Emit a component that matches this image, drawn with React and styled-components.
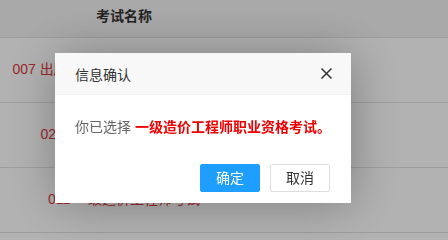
import React from 'react';
import styled, { createGlobalStyle } from 'styled-components';

const GlobalStyle = createGlobalStyle`
  html, body {
    margin: 0;
    padding: 0;
    background: #fff;
    font-family: "Liberation Sans", "Noto Sans CJK SC", sans-serif;
    font-size: 14px;
    color: #333;
  }
`;

const exams = [
  { code: '007', name: '出版专业技术人员职业资格考试' },
  { code: '020', name: '初级会计职称资格考试' },
  { code: '011', name: '一级造价工程师考试' },
];

function Page() {
  return (
    <Table>
      <HeadRow>
        <HeadCell>考试名称</HeadCell>
        <HeadCell />
      </HeadRow>
      {exams.map((exam) => (
        <Row key={exam.code}>
          <Cell>
            {exam.code} {exam.name}
          </Cell>
          <Cell />
        </Row>
      ))}
    </Table>
  );
}

function CloseIcon() {
  return (
    <svg width='13' height='13' viewBox='0 0 13 13'>
      <path d='M1.5 1.5 L11.5 11.5 M11.5 1.5 L1.5 11.5' stroke='#333' strokeWidth='1.5' fill='none' />
    </svg>
  );
}

function ConfirmDialog() {
  return (
    <>
      <Shade />
      <Dialog>
        <DialogHeader>
          <DialogTitle>信息确认</DialogTitle>
          <CloseButton>
            <CloseIcon />
          </CloseButton>
        </DialogHeader>
        <DialogBody>
          你已选择 <Highlight>一级造价工程师职业资格考试。</Highlight>
        </DialogBody>
        <DialogFooter>
          <ActionButton primary>确定</ActionButton>
          <ActionButton>取消</ActionButton>
        </DialogFooter>
      </Dialog>
    </>
  );
}

export default function App() {
  return (
    <>
      <GlobalStyle />
      <Page />
      <ConfirmDialog />
    </>
  );
}

const Table = styled.div`
  width: 100%;
  height: 234px;
  overflow: hidden;
`;

const HeadRow = styled.div`
  display: grid;
  grid-template-columns: 248px 1fr;
  height: 37px;
  background: #f2f2f2;
  border-bottom: 1px solid #e2e2e2;
`;

const HeadCell = styled.div`
  display: flex;
  align-items: center;
  justify-content: center;
  font-weight: bold;
  color: #333;
  padding-bottom: 7px;
`;

const Row = styled.div`
  display: grid;
  grid-template-columns: 248px 1fr;
  height: 64px;
  border-bottom: 1px solid #e2e2e2;
`;

const Cell = styled.div`
  display: flex;
  align-items: center;
  justify-content: center;
  white-space: nowrap;
  color: #e03a3e;
  padding-bottom: 4px;
`;

const Shade = styled.div`
  position: fixed;
  inset: 0;
  background: rgba(0, 0, 0, 0.3);
`;

const Dialog = styled.div`
  position: fixed;
  left: 55px;
  top: 53px;
  width: 296px;
  background: #fff;
  box-shadow: 1px 1px 50px rgba(0, 0, 0, 0.3);
`;

const DialogHeader = styled.div`
  display: flex;
  align-items: center;
  justify-content: space-between;
  height: 41px;
  padding: 0 18px 0 20px;
  background: #f8f8f8;
  border-bottom: 1px solid #eee;
`;

const DialogTitle = styled.span`
  color: #333;
  font-size: 14px;
`;

const CloseButton = styled.span`
  display: flex;
  width: 13px;
  height: 13px;
  cursor: pointer;
`;

const DialogBody = styled.div`
  padding: 21px 20px 20px;
  line-height: 22px;
  color: #666;
  white-space: nowrap;
`;

const Highlight = styled.span`
  color: #ee0000;
  font-weight: bold;
`;

const DialogFooter = styled.div`
  display: flex;
  justify-content: flex-end;
  gap: 10px;
  padding: 6px 21px 11px;
`;

const ActionButton = styled.a`
  box-sizing: border-box;
  height: 28px;
  line-height: 26px;
  padding: 0 15px;
  border: 1px solid ${(p) => (p.primary ? '#1e9fff' : '#dedede')};
  border-radius: 2px;
  background: ${(p) => (p.primary ? '#1e9fff' : '#fff')};
  color: ${(p) => (p.primary ? '#fff' : '#333')};
  font-size: 14px;
  cursor: pointer;
`;
